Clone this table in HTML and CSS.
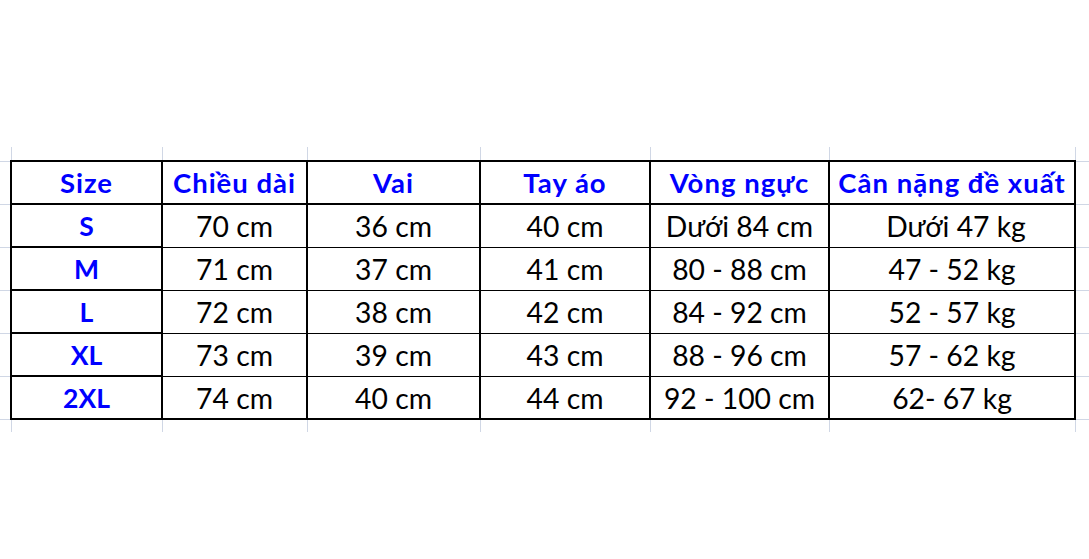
FILE: index.html
```html
<!DOCTYPE html>
<html lang="vi">
<head>
<meta charset="utf-8">
<title>Bảng size</title>
<link rel="stylesheet" href="styles.css">
</head>
<body>
<div class="page">
  <div class="sheet">
    <div class="table">
      <div class="cell head size-col">Size</div>
      <div class="cell head">Chiều dài</div>
      <div class="cell head">Vai</div>
      <div class="cell head">Tay áo</div>
      <div class="cell head">Vòng ngực</div>
      <div class="cell head">Cân nặng đề xuất</div>

      <div class="cell size size-col">S</div>
      <div class="cell">70 cm</div>
      <div class="cell">36 cm</div>
      <div class="cell">40 cm</div>
      <div class="cell">Dưới 84 cm</div>
      <div class="cell shift">Dưới 47 kg</div>

      <div class="cell size size-col">M</div>
      <div class="cell">71 cm</div>
      <div class="cell">37 cm</div>
      <div class="cell">41 cm</div>
      <div class="cell">80 - 88 cm</div>
      <div class="cell">47 - 52 kg</div>

      <div class="cell size size-col">L</div>
      <div class="cell">72 cm</div>
      <div class="cell">38 cm</div>
      <div class="cell">42 cm</div>
      <div class="cell">84 - 92 cm</div>
      <div class="cell">52 - 57 kg</div>

      <div class="cell size size-col">XL</div>
      <div class="cell">73 cm</div>
      <div class="cell">39 cm</div>
      <div class="cell">43 cm</div>
      <div class="cell">88 - 96 cm</div>
      <div class="cell">57 - 62 kg</div>

      <div class="cell size size-col last">2XL</div>
      <div class="cell last">74 cm</div>
      <div class="cell last">40 cm</div>
      <div class="cell last">44 cm</div>
      <div class="cell last">92 - 100 cm</div>
      <div class="cell last">62- 67 kg</div>
    </div>
  </div>
</div>
</body>
</html>
```
FILE: styles.css
```css
* { box-sizing: border-box; }

html, body {
  margin: 0;
  padding: 0;
  background: #ffffff;
}

.page {
  width: 1089px;
  height: 559px;
  padding-top: 147px;
}

.sheet {
  --gl: #d0d7e5;
  position: relative;
  width: 1089px;
  height: 285px;
  padding-top: 13px;
  padding-left: 10px;
  background-image:
    linear-gradient(var(--gl), var(--gl)),
    linear-gradient(var(--gl), var(--gl)),
    linear-gradient(var(--gl), var(--gl)),
    linear-gradient(var(--gl), var(--gl)),
    linear-gradient(var(--gl), var(--gl)),
    linear-gradient(var(--gl), var(--gl)),
    linear-gradient(var(--gl), var(--gl)),
    linear-gradient(var(--gl), var(--gl)),
    linear-gradient(var(--gl), var(--gl)),
    linear-gradient(var(--gl), var(--gl)),
    linear-gradient(var(--gl), var(--gl)),
    linear-gradient(var(--gl), var(--gl)),
    linear-gradient(var(--gl), var(--gl)),
    linear-gradient(var(--gl), var(--gl));
  background-repeat: no-repeat;
  background-size:
    1px 100%, 1px 100%, 1px 100%, 1px 100%, 1px 100%, 1px 100%, 1px 100%,
    100% 1px, 100% 1px, 100% 1px, 100% 1px, 100% 1px, 100% 1px, 100% 1px;
  background-position:
    11px 0, 162px 0, 307px 0, 480px 0, 650px 0, 829px 0, 1075px 0,
    0 14px, 0 57px, 0 100px, 0 143px, 0 186px, 0 229px, 0 272px;
}

.table {
  display: grid;
  grid-template-columns: 151px 145px 173px 170px 179px 246px;
  grid-auto-rows: 43px;
  width: max-content;
  background: #ffffff;
  border-left: 2px solid #000;
  border-top: 2px solid #000;
  font-family: Lato, "Open Sans", "DejaVu Sans", sans-serif;
  color: #000;
}

.cell {
  border-right: 2px solid #000;
  border-bottom: 1px solid #000;
  text-align: center;
  white-space: nowrap;
  font-size: 28.3px;
  line-height: 28px;
  padding-top: 7px;
}

.head {
  border-bottom-width: 2px;
  color: #0000ff;
  font-weight: 700;
  font-size: 27.5px;
  line-height: 27.5px;
  letter-spacing: 1px;
  padding-top: 7px;
}

.size {
  color: #0000ff;
  font-weight: 700;
  font-size: 26.5px;
  line-height: 26.5px;
  padding-top: 8px;
}

.size-col {
  border-bottom-width: 2px;
}

.last {
  border-bottom-width: 2px;
}

.shift {
  padding-left: 8px;
}
```
